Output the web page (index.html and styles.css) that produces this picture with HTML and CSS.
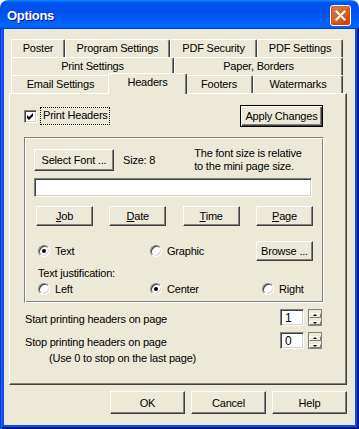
FILE: index.html
```html
<!DOCTYPE html>
<html lang="en">
<head>
<meta charset="utf-8">
<title>Options</title>
<link rel="stylesheet" href="styles.css">
</head>
<body>
<div class="window">
  <div class="titlebar">
    <span class="title">Options</span>
    <span class="close">
      <svg width="13" height="13" viewBox="0 0 13 13"><path d="M2.5 2.5 L10.5 10.5 M10.5 2.5 L2.5 10.5" stroke="#fff" stroke-width="2" stroke-linecap="square"/></svg>
    </span>
  </div>
  <div class="frame">
    <div class="client">
      <div class="tabs">
        <div class="tabrow">
          <div class="tab w-poster">Poster</div>
          <div class="tab w-program">Program Settings</div>
          <div class="tab w-security">PDF Security</div>
          <div class="tab w-pdfset">PDF Settings</div>
        </div>
        <div class="tabrow">
          <div class="tab w-print">Print Settings</div>
          <div class="tab w-paper">Paper, Borders</div>
        </div>
        <div class="tabrow front">
          <div class="tab w-email">Email Settings</div>
          <div class="tab selected">Headers</div>
          <div class="tab w-footers">Footers</div>
          <div class="tab w-water">Watermarks</div>
        </div>
      </div>
      <div class="panel">
        <div class="toprow">
          <div class="checkline">
            <span class="checkbox"><svg width="7" height="7" viewBox="0 0 7 7"><polygon points="0,2 2,4 6,0 6,3 2,7 0,5" fill="#000"/></svg></span>
            <span class="focus">Print Headers</span>
          </div>
          <button class="btn default apply">Apply Changes</button>
        </div>
        <div class="group">
          <div class="fontrow">
            <button class="btn selfont">Select Font ...</button>
            <span class="size">Size: 8</span>
            <span class="note">The font size is relative<br>to the mini page size.</span>
          </div>
          <div class="textbox"></div>
          <div class="fieldbtns">
            <button class="btn small"><u>J</u>ob</button>
            <button class="btn small"><u>D</u>ate</button>
            <button class="btn small"><u>T</u>ime</button>
            <button class="btn small"><u>P</u>age</button>
          </div>
          <div class="sourcerow">
            <span class="opt"><span class="radio on"></span>Text</span>
            <span class="opt"><span class="radio"></span>Graphic</span>
            <button class="btn small">Browse ...</button>
          </div>
          <div class="justlabel">Text justification:</div>
          <div class="justrow">
            <span class="opt"><span class="radio"></span>Left</span>
            <span class="opt"><span class="radio on"></span>Center</span>
            <span class="opt"><span class="radio"></span>Right</span>
          </div>
        </div>
        <div class="pagerow first">
          <span>Start printing headers on page</span>
          <div class="spin">
            <div class="spinfield">1</div>
            <div class="spinbtns"><span class="sb up"><i></i></span><span class="sb down"><i></i></span></div>
          </div>
        </div>
        <div class="pagerow">
          <span>Stop printing headers on page</span>
          <div class="spin">
            <div class="spinfield">0</div>
            <div class="spinbtns"><span class="sb up"><i></i></span><span class="sb down"><i></i></span></div>
          </div>
        </div>
        <div class="hint">(Use 0 to stop on the last page)</div>
      </div>
      <div class="footer">
        <button class="btn dlg">OK</button>
        <button class="btn dlg">Cancel</button>
        <button class="btn dlg">Help</button>
      </div>
    </div>
  </div>
</div>
</body>
</html>
```

FILE: styles.css
```css
* { box-sizing: border-box; }
html, body { margin: 0; padding: 0; background: #fff; }
body {
  width: 359px; height: 429px; overflow: hidden;
  font-family: "Liberation Sans", Arial, sans-serif;
  font-size: 11px; letter-spacing: -0.2px; color: #000;
}
button { font: inherit; letter-spacing: inherit; color: #000; margin: 0; padding: 0; }

.window { width: 359px; height: 429px; display: flex; flex-direction: column; }

.titlebar {
  height: 29px; flex: none;
  border-radius: 8px 8px 0 0;
  background: linear-gradient(180deg, #0997ff 0, #0053ee 8%, #0050ee 40%, #0066ff 88%, #0066ff 93%, #005bff 95%, #003dd7 96%, #003dd7 100%);
  display: flex; align-items: center; justify-content: space-between;
  padding: 0 8px 0 7px;
}
.title {
  color: #fff; font-weight: bold; font-size: 13px; letter-spacing: -0.3px;
  text-shadow: 1px 1px #0f1089; margin-top: 1px;
}
.close {
  width: 21px; height: 21px; border: 1px solid #fff; border-radius: 3px;
  background: radial-gradient(circle at 90% 90%, #cc4600 0%, #dc6527 55%, #cd7546 70%, #e97458 100%);
  display: flex; align-items: center; justify-content: center;
  box-shadow: inset 0 -1px 2px 1px #da4600;
  margin-top: 2px;
}

.frame {
  flex: 1; display: flex; padding: 0 4px 4px;
  background: #0a4fe0;
  box-shadow: inset 1px 0 #0831d9, inset 2px 0 #166aee, inset -1px -1px #00138c, inset -2px -2px #001ea0;
}
.client {
  flex: 1; background: #ece9d8; display: flex; flex-direction: column;
  padding: 10px 8px 11px 5px;
}

/* tabs */
.tabs { margin-left: 2px; width: 332px; }
.tabrow { display: flex; height: 18px; align-items: flex-end; }
.tab {
  height: 18px; background: #ece9d8;
  border-top: 1px solid #fff; border-left: 1px solid #fff; border-right: 1px solid #404040;
  box-shadow: inset -1px 0 #808080;
  border-radius: 2px 2px 0 0;
  text-align: center; line-height: 17px; white-space: nowrap;
}
.w-poster { width: 54px; }
.w-program { width: 105px; }
.w-security { width: 87px; }
.w-pdfset { width: 86px; }
.w-print { width: 163px; }
.w-paper { width: 169px; }
.w-email { width: 99px; }
.w-footers { width: 68px; }
.w-water { width: 90px; }
.tab.selected {
  width: 79px; height: 21px; margin: 0 -2px -1px; position: relative; z-index: 2;
  line-height: 16px;
}

.panel {
  height: 292px; flex: none;
  border-top: 1px solid #fff; border-left: 1px solid #fff;
  border-right: 1px solid #404040; border-bottom: 1px solid #404040;
  box-shadow: inset -1px -1px #808080;
  padding: 11px 0 0 14px;
}
.toprow { width: 299px; height: 22px; display: flex; align-items: center; justify-content: space-between; }
.checkline { display: flex; align-items: center; gap: 4px; }
.checkbox {
  width: 13px; height: 13px; background: #fff;
  border: 1px solid; border-color: #808080 #fff #fff #808080;
  box-shadow: inset 1px 1px #404040, inset -1px -1px #d4d0c8;
  display: flex; align-items: center; justify-content: center;
}
.checkbox svg { display: block; }
.focus { outline: 1px dotted #000; outline-offset: 0; padding: 1px 1px 2px 2px; line-height: 13px; }

.btn {
  background: #ece9d8;
  border: 1px solid; border-color: #fff #404040 #404040 #fff;
  box-shadow: inset -1px -1px #808080;
  text-align: center;
}
.btn.default {
  border: 1px solid #000;
  box-shadow: inset 1px 1px #fff, inset -1px -1px #404040, inset -2px -2px #808080;
}
.apply { width: 83px; height: 22px; }

.group {
  width: 300px; height: 166px; margin-top: 10px;
  border: 1px solid; border-color: #808080 #fff #fff #808080;
  box-shadow: inset 1px 1px #fff, inset -1px -1px #808080;
  padding: 9px 0 0 9px;
}
.fontrow { height: 26px; display: flex; align-items: center; }
.selfont { width: 80px; height: 22px; }
.size { margin-left: 9px; }
.note { margin-left: 39px; line-height: 13px; }
.textbox {
  width: 278px; height: 19px; margin-top: 5px; background: #fff;
  border: 1px solid; border-color: #808080 #fff #fff #808080;
  box-shadow: inset 1px 1px #404040, inset -1px -1px #d4d0c8;
}
.fieldbtns { width: 277px; margin: 9px 0 0 2px; display: flex; justify-content: space-between; }
.btn.small { width: 57px; height: 20px; }
.sourcerow {
  margin-top: 15px; padding-left: 4px; height: 20px;
  display: grid; grid-template-columns: 112px 106px 57px; align-items: center;
}
.opt { display: flex; align-items: center; gap: 5px; white-space: nowrap; }
.radio {
  width: 12px; height: 12px; border-radius: 50%; background: #fff; flex: none;
  border: 1px solid; border-color: #808080 #fff #fff #808080;
  box-shadow: inset 1px 1px #404040, inset -1px -1px #d4d0c8;
  display: flex; align-items: center; justify-content: center;
}
.radio.on::after { content: ""; width: 4px; height: 4px; border-radius: 50%; background: #000; }
.justlabel { margin: 6px 0 0 4px; line-height: 13px; }
.justrow {
  margin-top: 2px; padding-left: 4px; height: 14px;
  display: grid; grid-template-columns: 112px 112px auto; align-items: center;
}

.pagerow { width: 298px; height: 17px; margin-top: 6px; padding-left: 1px; display: flex; align-items: center; justify-content: space-between; }
.pagerow span { margin-top: 3px; }
.spin { display: flex; gap: 4px; height: 17px; }
.spinfield {
  width: 24px; height: 17px; background: #fff; padding: 1px 0 0 4px; line-height: 14px; font-size: 12px;
  border: 1px solid; border-color: #808080 #fff #fff #808080;
  box-shadow: inset 1px 1px #404040, inset -1px -1px #d4d0c8;
}
.spinbtns { width: 14px; height: 17px; display: flex; flex-direction: column; border: 1px solid #808080; }
.sb {
  flex: 1; background: #ece9d8; display: flex; align-items: center; justify-content: center;
  border: 1px solid; border-color: #fff #808080 #808080 #fff;
}
.sb i { display: block; width: 0; height: 0; border-left: 2px solid transparent; border-right: 2px solid transparent; }
.sb.up i { border-bottom: 2px solid #000; }
.sb.down i { border-top: 2px solid #000; }
.hint { margin: 3px 0 0 25px; line-height: 13px; }

.footer { margin-top: 6px; display: flex; justify-content: flex-end; gap: 6px; }
.btn.dlg { width: 75px; height: 23px; }
```
